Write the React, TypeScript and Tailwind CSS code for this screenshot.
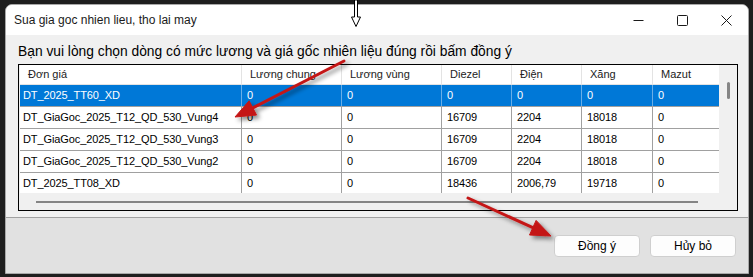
export default function App() {
  const cols = [221, 100, 100, 70, 70, 71, 67];
  const headers = ["Đơn giá", "Lương chung", "Lương vùng", "Diezel", "Điện", "Xăng", "Mazut"];
  const rows = [
    ["DT_2025_TT60_XD", "0", "0", "0", "0", "0", "0"],
    ["DT_GiaGoc_2025_T12_QD_530_Vung4", "0", "0", "16709", "2204", "18018", "0"],
    ["DT_GiaGoc_2025_T12_QD_530_Vung3", "0", "0", "16709", "2204", "18018", "0"],
    ["DT_GiaGoc_2025_T12_QD_530_Vung2", "0", "0", "16709", "2204", "18018", "0"],
    ["DT_2025_TT08_XD", "0", "0", "18436", "2006,79", "19718", "0"],
  ];

  return (
    <div className="relative w-[753px] h-[277px] overflow-hidden bg-[#1e1e1e] pl-[5px] pt-[4px] font-['Liberation_Sans',Arial,sans-serif] text-black">
      {/* Dialog window */}
      <div className="flex flex-col w-[744px] h-[270px] rounded-t-[7px] overflow-hidden border border-[#a8a8a8] bg-[#f0f0f0]">
        {/* Title bar */}
        <div className="flex items-center h-[30px] bg-white shrink-0">
          <span className="pl-[8px] text-[12px] text-[#1a1a1a]">Sua gia goc nhien lieu, tho lai may</span>
          <div className="ml-auto flex h-full">
            <div className="flex w-[44px] items-center justify-center">
              <svg width="11" height="11" viewBox="0 0 11 11">
                <line x1="0.5" y1="5.5" x2="10.5" y2="5.5" stroke="#1a1a1a" strokeWidth="1" />
              </svg>
            </div>
            <div className="flex w-[44px] items-center justify-center">
              <svg width="11" height="11" viewBox="0 0 11 11">
                <rect x="0.5" y="0.5" width="10" height="10" rx="1" fill="none" stroke="#1a1a1a" strokeWidth="1" />
              </svg>
            </div>
            <div className="flex w-[44px] items-center justify-center">
              <svg width="11" height="11" viewBox="0 0 11 11">
                <path d="M0.5 0.5 L10.5 10.5 M10.5 0.5 L0.5 10.5" stroke="#1a1a1a" strokeWidth="1" />
              </svg>
            </div>
          </div>
        </div>

        {/* Body */}
        <div className="flex flex-col h-[182px] shrink-0 bg-[#f0f0f0] pl-[12px] pt-[9px]">
          <p className="h-[16px] leading-[16px] text-[13.8px] text-black">
            Bạn vui lòng chọn dòng có mức lương và giá gốc nhiên liệu đúng rồi bấm đồng ý
          </p>
          <div className="mt-[4px] flex flex-col w-[720px] h-[147px] border border-black bg-[#f0f0f0] pl-[1px]">
            <div className="flex h-[128px]">
              <div className="w-[699px] h-full overflow-hidden bg-white text-[11px]">
                <div className="flex h-[20px] border-b border-[#e3e3e3] text-[#222]">
                  {headers.map((h, i) => (
                    <div
                      key={h}
                      style={{ width: cols[i] }}
                      className={`flex items-center pl-[8px] shrink-0 ${i > 0 ? "border-l border-[#e3e3e3]" : ""}`}
                    >
                      {h}
                    </div>
                  ))}
                </div>
                {rows.map((r, ri) => (
                  <div
                    key={ri}
                    className={`flex h-[22px] border-b border-[#a0a0a0] ${ri === 0 ? "bg-[#0078d7] text-white" : "text-black"}`}
                  >
                    {r.map((c, i) => (
                      <div
                        key={i}
                        style={{ width: cols[i] }}
                        className={`flex items-center shrink-0 tracking-[-0.1px] ${i === 0 ? "pl-[3px]" : "pl-[5px]"} ${
                          i > 0 ? (ri === 0 ? "border-l border-[#6aaee6]" : "border-l border-[#a0a0a0]") : ""
                        }`}
                      >
                        {c}
                      </div>
                    ))}
                  </div>
                ))}
              </div>
              {/* vertical scrollbar */}
              <div className="w-[17px] h-full pl-[8px] pt-[17px]">
                <div className="w-[3px] h-[17px] rounded-full bg-[#858585]" />
              </div>
            </div>
            {/* horizontal scrollbar */}
            <div className="h-[17px] pl-[16px] pt-[8px]">
              <div className="w-[662px] h-[2px] bg-[#858585]" />
            </div>
          </div>
        </div>

        {/* Footer */}
        <div className="flex flex-1 justify-end gap-[10px] border-t border-[#a0a0a0] bg-[#e1e1e1] pr-[12px] pt-[17px]">
          <button className="w-[86px] h-[22px] rounded-[4px] border border-[#cfcfcf] bg-[#fdfdfd] text-[12px] text-black">
            Đồng ý
          </button>
          <button className="w-[86px] h-[22px] rounded-[4px] border border-[#cfcfcf] bg-[#fdfdfd] text-[12px] text-black">
            Hủy bỏ
          </button>
        </div>
      </div>

      {/* Red annotation arrows */}
      <svg className="absolute left-0 top-0 pointer-events-none" width="753" height="277" viewBox="0 0 753 277">
        <defs>
          <filter id="sh" x="-20%" y="-20%" width="140%" height="140%">
            <feDropShadow dx="3" dy="3" stdDeviation="2" floodColor="#000" floodOpacity="0.45" />
          </filter>
        </defs>
        <g filter="url(#sh)" fill="#c41616" stroke="#c41616">
          <line x1="344" y1="61" x2="252.8" y2="107.9" strokeWidth="3" strokeLinecap="round" />
          <polygon points="235,117 249.1,100.8 256.5,115" strokeWidth="1" strokeLinejoin="round" />
          <line x1="468" y1="198" x2="532.8" y2="227.7" strokeWidth="3" strokeLinecap="round" />
          <polygon points="551,236 529.5,235 536.1,220.4" strokeWidth="1" strokeLinejoin="round" />
        </g>
      </svg>

      {/* Mouse cursor */}
      <svg className="absolute left-[350px] top-0" width="12" height="28" viewBox="0 0 12 28">
        <polygon points="4.5,0 7.5,0 7.5,17 10.5,17 6,26.5 1.5,17 4.5,17" fill="#fff" stroke="#000" strokeWidth="1" />
      </svg>
    </div>
  );
}
